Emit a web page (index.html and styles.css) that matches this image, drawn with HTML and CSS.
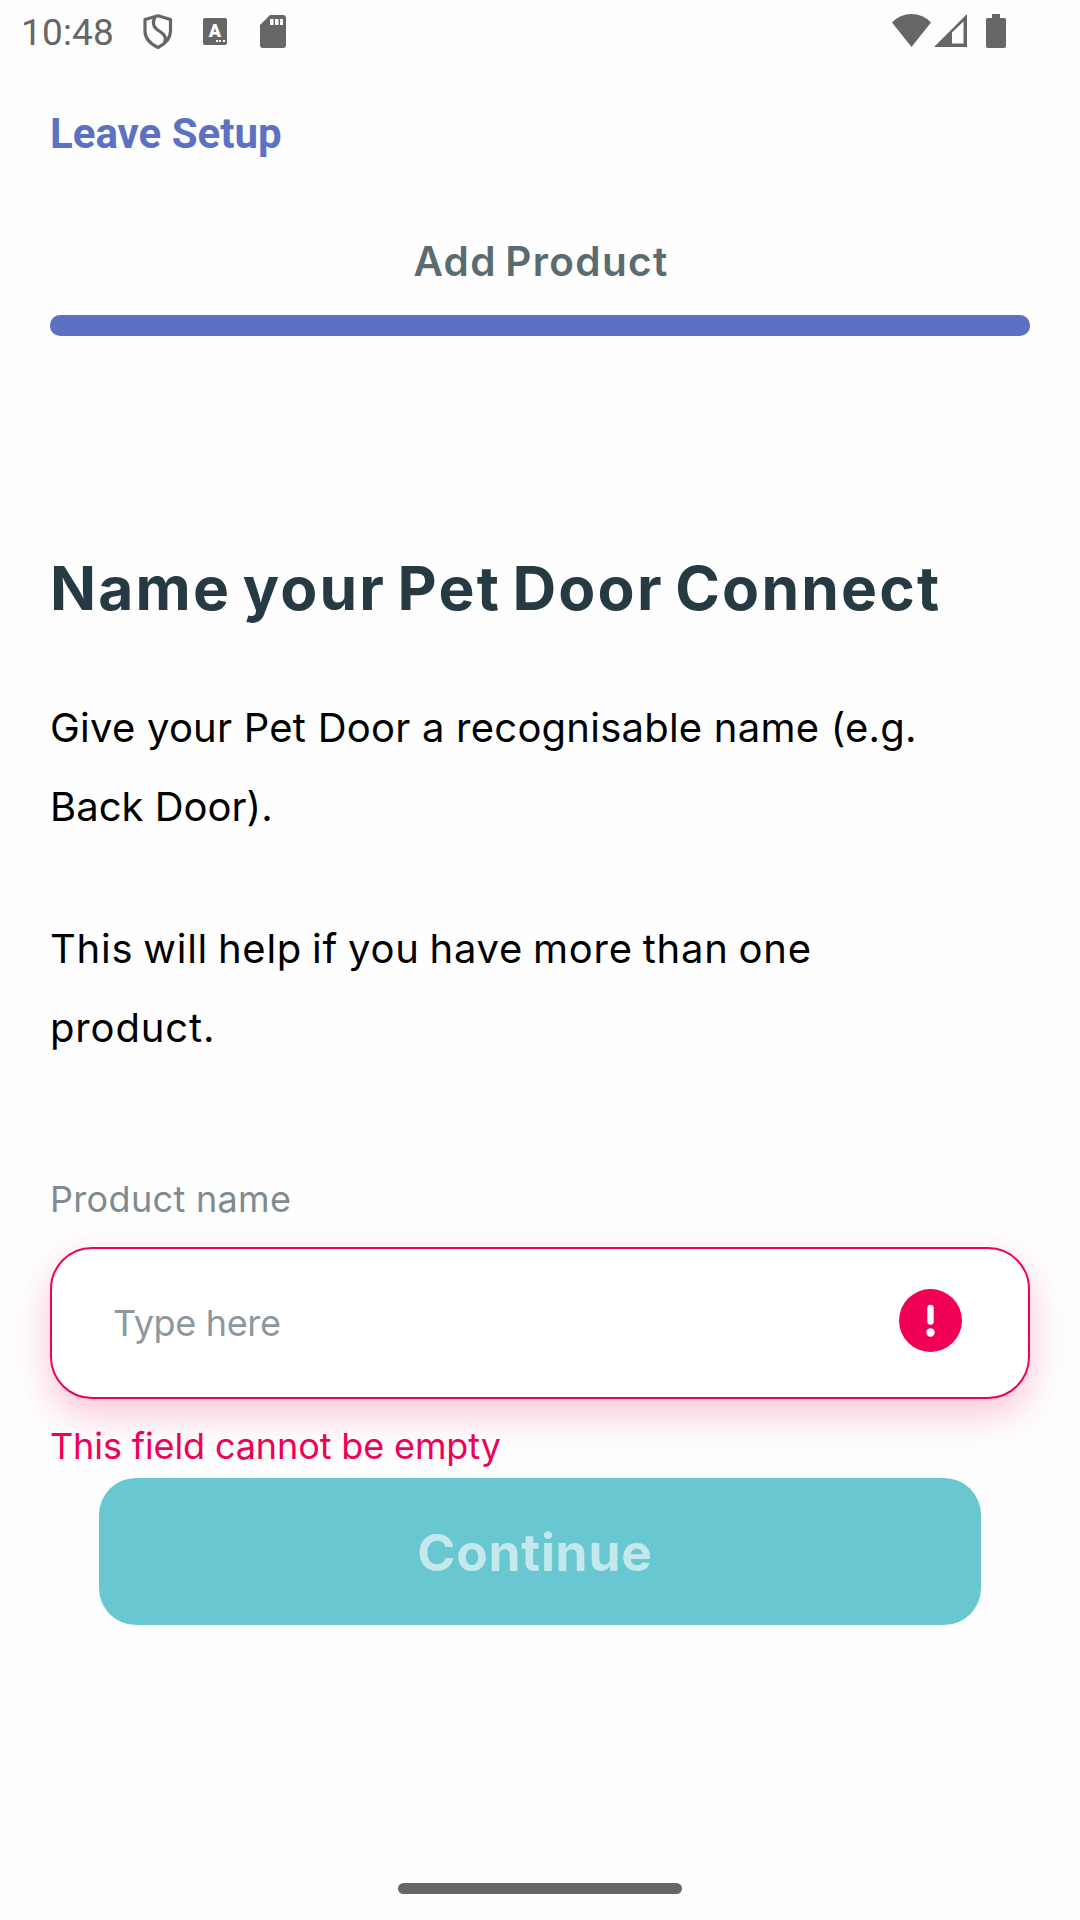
FILE: index.html
```html
<!DOCTYPE html>
<html lang="en">
<head>
<meta charset="utf-8">
<title>Add Product</title>
<link rel="stylesheet" href="styles.css">
</head>
<body>
<div class="screen">
  <header class="status">
    <span class="clock">10:48</span>
    <svg class="shield" width="30" height="36" viewBox="0 0 30 36" fill="none" stroke="#666" stroke-width="3.200" stroke-linejoin="round">
      <path d="M15 1.800 L27.500 5.500 V17 C27.500 25 21 30.500 15 33.500 C8.500 30.500 2 25 2 17 V5.500 Z"/>
      <path d="M12 3 C9.500 8 10 12.500 14 15.500 C19 19 24.500 21.500 21.500 28"/>
    </svg>
    <span class="badge">A<i class="dots"></i></span>
    <svg class="sd" width="26" height="33" viewBox="0 0 26 33">
      <path fill="#666" d="M10 0 H23 Q26 0 26 3 V30 Q26 33 23 33 H3 Q0 33 0 30 V10 Z"/>
      <path fill="#fff" d="M10 4h3.500v6h-3.500z M15 4h3.500v6h-3.500z M20 4h3v6h-3z"/>
    </svg>
    <div class="system">
      <svg width="39" height="33" viewBox="0 0 39 33"><path fill="#666" d="M0 8.500 Q8 0 19.500 0 Q31 0 39 8.500 L19.500 33 Z"/></svg>
      <svg class="signal" width="33" height="33" viewBox="0 0 33 33"><path fill="#666" fill-rule="evenodd" d="M0 33 L33 0 V33 Z M18 18.500 V29.500 H29.500 V7.500 Z"/></svg>
      <svg class="battery" width="20" height="34" viewBox="0 0 20 34"><path fill="#666" d="M6 0 H14 V4 H18.500 Q20 4 20 5.500 V32 Q20 34 18 34 H2 Q0 34 0 32 V5.500 Q0 4 1.500 4 H6 Z"/></svg>
    </div>
  </header>
  <main class="content">
    <a class="leave">Leave Setup</a>
    <h2 class="step">Add Product</h2>
    <div class="progress"></div>
    <h1 class="title">Name your Pet Door Connect</h1>
    <p class="copy">Give your Pet Door a recognisable name (e.g.<br><span class="short">Back Door).</span></p>
    <p class="copy second">This will help if you have more than one<br><span class="last">product.</span></p>
    <label class="label">Product name</label>
    <div class="field">
      <span class="placeholder">Type here</span>
      <svg width="63" height="63" viewBox="0 0 63 63">
        <circle cx="31.500" cy="31.500" r="31.500" fill="#f00057"/>
        <path d="M31.500 19 V32.500" stroke="#fff" stroke-width="6.400" stroke-linecap="round"/>
        <circle cx="31.500" cy="43.500" r="4.200" fill="#fff"/>
      </svg>
    </div>
    <p class="error">This field cannot be empty</p>
    <div class="button">Continue</div>
  </main>
  <div class="homebar"></div>
</div>
</body>
</html>
```
FILE: styles.css
```css
* { box-sizing: border-box; margin: 0; padding: 0; }
body { background: #fefefe; font-family: Inter, Roboto, sans-serif; }
svg { display: block; flex: none; }
.screen { width: 1080px; height: 1920px; display: flex; flex-direction: column; overflow: hidden; }

.status { height: 66px; padding: 0 74px 0 21px; display: flex; align-items: flex-start; color: #666; font-family: Roboto, sans-serif; }
.clock { width: 122px; font-size: 37px; line-height: 66px; letter-spacing: .16px; }
.shield { margin-top: 14px; }
.badge {
  width: 24px; height: 27px; margin: 18px 0 0 30px; border-radius: 2px; background: #666; color: #fff;
  display: flex; flex-direction: column; align-items: center;
  font-size: 18px; font-weight: 900; line-height: 26px;
}
.dots { width: 9px; height: 2px; margin: -4px 2px 0 0; align-self: flex-end; background: repeating-linear-gradient(90deg, #fff 0 2px, #666 2px 3.5px); }
.sd { margin: 15px 0 0 33px; }
.system { margin: 14px 0 0 auto; display: flex; }
.signal { margin-left: 3px; }
.battery { margin-left: 19px; }

.content { flex: 1; padding: 43px 50px 0; display: flex; flex-direction: column; }
.leave { font-family: Roboto, sans-serif; font-size: 42px; font-weight: 700; line-height: 50px; color: #5c71c2; }
.step { margin-top: 78px; padding-left: 2px; font-size: 40.5px; font-weight: 600; line-height: 50px; letter-spacing: 1.33px; word-spacing: -3px; text-align: center; color: #5b6b72; }
.progress { height: 21px; margin-top: 28px; border-radius: 10px; background: #5c71c2; }
.title { margin-top: 212px; font-size: 60.5px; font-weight: 700; line-height: 80px; letter-spacing: 2.17px; word-spacing: -5px; color: #263a43; white-space: nowrap; }
.copy { margin-top: 60px; font-size: 40px; line-height: 79px; letter-spacing: .23px; color: #000; }
.short { letter-spacing: 0; }
.second { margin-top: 63px; letter-spacing: .74px; word-spacing: -2px; }
.last { letter-spacing: .86px; }
.label { margin-top: 110px; font-size: 36px; line-height: 44px; letter-spacing: .33px; color: #7f8b90; }
.field {
  height: 152px; margin-top: 26px; padding: 0 66px 0 61px; border: 2px solid #f00057; border-radius: 42px; background: #fff;
  box-shadow: 0 15px 38px rgba(240, 0, 87, .23);
  display: flex; align-items: center; justify-content: space-between;
}
.field svg { margin-bottom: 6px; }
.placeholder { font-size: 36px; line-height: 44px; letter-spacing: -.33px; color: #8d989e; }
.error { margin-top: 25px; font-size: 36px; line-height: 44px; letter-spacing: -.12px; color: #f00057; }
.button {
  height: 147px; margin: 10px 49px 0; padding: 2px 10px 0 0; border-radius: 37px; background: #69c7d1; color: #c3e9ec;
  font-size: 51.5px; font-weight: 700; line-height: 144px; letter-spacing: .75px; text-align: center;
}
.homebar { width: 284px; height: 11px; margin: 0 auto 26px; border-radius: 6px; background: #666; }
```
